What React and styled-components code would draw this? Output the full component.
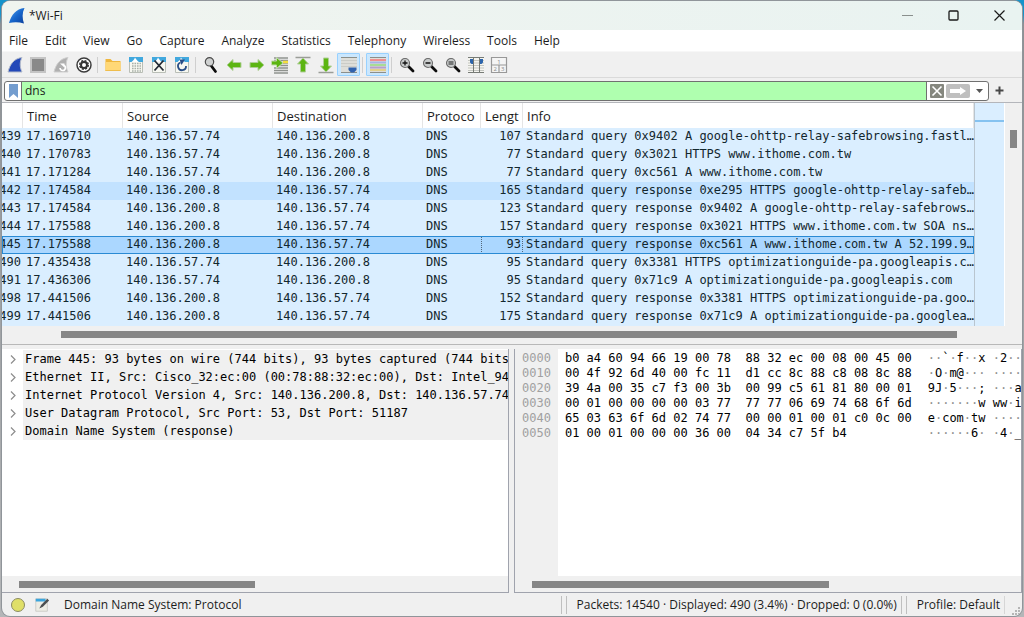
import React, { useState } from "react";
import styled, { createGlobalStyle } from "styled-components";

const GlobalStyle = createGlobalStyle`
  * {
    box-sizing: border-box;
  }
  body {
    margin: 0;
    background: linear-gradient(#1593cb 0, #1593cb 14px, #8d9093 24px, #b4b6b8 100%);
    color: #1c1c1c;
    font-family: "Open Sans", "Noto Sans", sans-serif;
    font-size: 12px;
  }
  button, input {
    font: inherit;
    color: inherit;
  }
`;

const mono = `"DejaVu Sans Mono", "Liberation Mono", monospace`;

const Desktop = styled.div`
  min-height: 100vh;
  padding: 1px 2px;
  display: flex;
`;

const Window = styled.div`
  flex: 1;
  min-width: 0;
  display: flex;
  flex-direction: column;
  background: #f0f0f0;
  border-radius: 8px;
  overflow: hidden;
  box-shadow: 0 0 0 1px #90959a;
`;

const TitleBar = styled.header`
  height: 29px;
  display: flex;
  align-items: center;
  padding-left: 7px;
  background: linear-gradient(90deg, #f0f4ef, #e9f3f1);
  h1 {
    flex: 1;
    margin: 0 0 0 4px;
    font-size: 12px;
    font-weight: 400;
  }
`;

const CaptionButton = styled.button`
  width: 46px;
  height: 29px;
  padding: 0;
  border: 0;
  background: none;
  svg {
    display: block;
    margin: 0 auto;
  }
`;

const MenuBar = styled.nav`
  height: 22px;
  display: flex;
  align-items: center;
  gap: 17px;
  padding: 0 7px;
  background: #fff;
  border-bottom: 1px solid #f7f7f7;
`;

const MenuButton = styled.button`
  padding: 0;
  border: 0;
  background: none;
  line-height: 20px;
`;

const ToolBar = styled.div`
  height: 26px;
  display: flex;
  align-items: center;
  padding: 0 1px;
  border-bottom: 1px solid #dadada;
`;

const ToolButton = styled.button`
  width: 23px;
  height: 23px;
  padding: 0;
  display: flex;
  align-items: center;
  justify-content: center;
  border: 1px solid ${(props) => (props.$active ? "#98d1ff" : "transparent")};
  background: ${(props) => (props.$active ? "#cbe7fd" : "none")};
  border-radius: 1px;
  svg {
    flex: none;
  }
`;

const Separator = styled.span`
  width: 1px;
  height: 16px;
  margin: 0 3px 0 2px;
  background: #cfcfcf;
`;

const FilterBar = styled.form`
  height: 25px;
  display: flex;
  align-items: center;
  padding: 1px 15px 0 2px;
  border-bottom: 1px solid #b4b6bb;
`;

const FilterBox = styled.div`
  flex: 1;
  height: 20px;
  display: flex;
  background: #fff;
  border: 1px solid #707070;
  border-radius: 3px;
  overflow: hidden;
`;

const BoxButton = styled.button`
  width: ${(props) => props.$width}px;
  padding: 0;
  display: flex;
  align-items: center;
  justify-content: center;
  border: 0;
  background: none;
`;

const FilterInput = styled.input`
  flex: 1;
  min-width: 0;
  padding: 0 3px;
  border: solid #707070;
  border-width: 0 1px;
  outline: 0;
  border-radius: 0;
  background: #afffaf;
`;

const AddButton = styled.button`
  width: 16px;
  height: 20px;
  margin-left: 2px;
  padding: 0;
  border: 0;
  background: none;
  svg {
    display: block;
    margin: 0 auto;
  }
`;

const PacketArea = styled.section`
  display: flex;
  background: #fff;
`;

const PacketTable = styled.table`
  flex: 1;
  min-width: 0;
  width: 100%;
  table-layout: fixed;
  border-collapse: separate;
  border-spacing: 0;
  th {
    height: 25px;
    padding: 0 0 0 4px;
    font-size: 13px;
    font-weight: 400;
    text-align: left;
    white-space: nowrap;
    overflow: hidden;
    background: #fff;
    border-right: 1px solid #e5e5e5;
  }
  td {
    height: 18px;
    padding: 0 2px 2px 3px;
    font: 12px/16px ${mono};
    color: #12272e;
    white-space: nowrap;
    overflow: hidden;
  }
  td:nth-child(1) {
    direction: rtl;
  }
  td:nth-child(6) {
    text-align: right;
  }
  td:last-child {
    padding-right: 0;
  }
`;

const rowColors = { plain: "#daeeff", related: "#c2e2ff", selected: "#abd7ff" };

const PacketRow = styled.tr`
  background: ${(props) => rowColors[props.$state]};
  outline: ${(props) => (props.$state === "selected" ? "1px solid #2a8ad4" : "none")};
  outline-offset: -1px;
  td:nth-child(6) {
    outline: ${(props) => (props.$state === "selected" ? "1px dotted #52677a" : "none")};
    outline-offset: -1px;
  }
`;

const MiniMap = styled.div`
  width: 30px;
  border-left: 1px solid #b9c5cf;
  background: linear-gradient(#daeeff 17px, #85c2f0 17px, #85c2f0 19px, #daeeff 19px);
`;

const VerticalScroll = styled.div`
  width: 18px;
  padding: 27px 5px 0;
  background: #f0f0f0;
  border-left: 1px solid #fff;
`;

const HorizontalScroll = styled.div`
  height: ${(props) => props.$height}px;
  padding: 5px ${(props) => props.$right} 0 ${(props) => props.$left};
  background: #f0f0f0;
`;

const Thumb = styled.div`
  width: 100%;
  height: ${(props) => props.$height || 7}px;
  background: #868686;
`;

const Panes = styled.main`
  flex: 1;
  display: grid;
  grid-template-columns: minmax(0, 507fr) minmax(0, 508fr);
  gap: 5px;
  padding-top: 4px;
  border-top: 1px solid #b8b8b8;
`;

const Pane = styled.section`
  display: flex;
  flex-direction: column;
  background: #fff;
  border: solid #a0a3ad;
  border-width: 0 1px 1px ${(props) => (props.$left ? 0 : 1)}px;
`;

const PaneBody = styled.div`
  flex: 1;
  display: flex;
  overflow: hidden;
`;

const Tree = styled.ul`
  flex: 1;
  min-width: 0;
  margin: 1px 0 0;
  padding: 0;
  list-style: none;
`;

const TreeRow = styled.li`
  display: flex;
  button {
    width: 21px;
    padding: 0;
    border: 0;
    background: none;
  }
  span {
    flex: 1;
    height: 18px;
    padding-left: 2px;
    background: #f0f0f0;
    color: #000;
    font: 12px/18px ${mono};
    white-space: pre;
    overflow: hidden;
  }
`;

const HexColumn = styled.div`
  flex: ${(props) => (props.$fill ? "1" : "none")};
  min-width: 0;
  padding: ${(props) => props.$pad};
  overflow: hidden;
  background: ${(props) => props.$bg || "#fff"};
  color: ${(props) => props.$color || "#000"};
  font: 12px/15px ${mono};
  white-space: pre;
`;

const HexLine = styled.div`
  height: 15px;
`;

const Faint = styled.span`
  color: #909090;
`;

const StatusBar = styled.footer`
  height: 23px;
  display: flex;
  align-items: center;
  padding-left: 8px;
  white-space: nowrap;
`;

const StatusText = styled.span`
  flex: ${(props) => (props.$grow ? "1" : "none")};
  margin-left: ${(props) => props.$indent}px;
`;

const IconButton = styled.button`
  width: 24px;
  height: 20px;
  padding: 0;
  border: 0;
  background: none;
  text-align: left;
  svg {
    display: block;
  }
`;

const Grip = styled.span`
  width: 6px;
  height: 18px;
  margin-left: ${(props) => props.$indent || 0}px;
  border: solid #bfbfbf;
  border-width: 0 1px;
`;

const Svg = ({ size = 18, children }) => (
  <svg width={size} height={size} viewBox="0 0 18 18" fill="none" aria-hidden="true">
    {children}
  </svg>
);

const Fin = ({ gray, restart }) => (
  <Svg>
    <path
      d="M2 16C4 8 8 2.5 16 1.5C13.5 6 13.8 11.5 16 16Z"
      fill={gray ? "#b0b0b0" : "#2448b8"}
      stroke={gray ? "#cfcfcf" : "#b4bccb"}
    />
    {restart && (
      <>
        <path d="M8 12a2.700 2.700 0 1 0 3.500-2.800" stroke="#fff" strokeWidth="1.6" />
        <path d="M8 7.500h4.500v4z" fill="#fff" />
      </>
    )}
  </Svg>
);

const Logo = () => (
  <svg width="16" height="18" viewBox="0 0 16 18" aria-hidden="true">
    <defs>
      <linearGradient id="fin" x1="0" y1="0" x2="1" y2="1">
        <stop offset="0" stopColor="#58a5ee" />
        <stop offset="0.5" stopColor="#1767cc" />
        <stop offset="1" stopColor="#0b3f9b" />
      </linearGradient>
    </defs>
    <path d="M0 16C2.5 7.5 7 2 15.5 1C13 6 13.2 11.5 15 16.5C10 15 5 15 0 16Z" fill="url(#fin)" />
  </svg>
);

const Page = ({ children }) => (
  <Svg>
    <path d="M2.5 1.5h13v15h-13z" fill="#f7f8f1" stroke="#b9beb6" />
    <path d="M2 1h14v5H2z" fill="#41a8de" />
    <path d="M4.500 6C6 5 7.500 3 8 1.500C9 3 10 4.500 12 6z" fill="#fff" />
    {children}
  </Svg>
);

const Arrow = ({ turn = 0, bar }) => (
  <Svg>
    {bar === "top" && <path d="M1.500 1.500h15" stroke="#9a9d98" strokeWidth="1.4" />}
    {bar === "bottom" && <path d="M1.500 16.500h15" stroke="#9a9d98" strokeWidth="1.4" />}
    <path
      d="M2 9l6-5.500v3h8v5H8v3z"
      transform={`rotate(${turn} 9 9)`}
      fill="#5cb512"
      stroke="#b0cf98"
      strokeLinejoin="round"
    />
  </Svg>
);

const Lens = ({ sign }) => (
  <Svg>
    <path d="M10.500 10.500l4.500 4.500" stroke="#0d0d0d" strokeWidth="2.8" strokeLinecap="round" />
    <circle cx="7" cy="7" r="4.500" fill="#c9cccc" stroke="#6a6a6a" strokeWidth="1.1" />
    {sign === "plus" && <path d="M4.5 7h5M7 4.5v5" stroke="#111" strokeWidth="1.3" />}
    {sign === "minus" && <path d="M4.5 7h5" stroke="#111" strokeWidth="1.5" />}
    {sign === "equal" && <path d="M4.5 6h5M4.5 8h5" stroke="#222" strokeWidth="1.2" />}
  </Svg>
);

const Find = () => (
  <Svg>
    <path d="M9 9.500l4.500 6" stroke="#0d0d0d" strokeWidth="2.8" strokeLinecap="round" />
    <circle cx="7.500" cy="5.800" r="4.200" fill="#cfd1d1" stroke="#4c4c4c" strokeWidth="1.2" />
  </Svg>
);

const Stop = () => (
  <Svg>
    <path d="M2 2h14v14H2z" fill="#898989" stroke="#c4c4c4" strokeWidth="2" />
  </Svg>
);

const Options = () => (
  <Svg>
    <circle cx="9" cy="9" r="7" fill="#fff" stroke="#3c3c3c" strokeWidth="1.5" />
    <circle cx="9" cy="9" r="4.300" stroke="#343434" strokeWidth="1.4" strokeDasharray="2.1 1.277" />
    <circle cx="9" cy="9" r="3" stroke="#343434" strokeWidth="2" />
  </Svg>
);

const Folder = () => (
  <Svg>
    <path d="M1.5 3h5l2 2h8v10h-15z" fill="#efb73e" />
    <path d="M1.5 6h15v9h-15z" fill="#ffd877" />
    <path d="M1.5 14.5h15" stroke="#efbd4c" />
  </Svg>
);

const Save = () => (
  <Page>
    <path d="M5 7.5h9M5 10h9M5 12.5h9M5 15h9" stroke="#a9b0a9" strokeWidth="1.4" strokeDasharray="1.6 0.9" />
  </Page>
);

const Close = () => (
  <Page>
    <path d="M4.500 4.500l9 10M13.500 4.500l-9 10" stroke="#252b35" strokeWidth="1.8" />
  </Page>
);

const Reload = () => (
  <Page>
    <path d="M7.500 6.500A4 4 0 1 0 13 10" stroke="#294d85" strokeWidth="1.8" />
    <path d="M6.500 3.500H12L8.500 9z" fill="#294d85" />
  </Page>
);

const GoTo = () => (
  <Svg>
    <path d="M3 2h14M3 4.500h14M9 7h8M9 9.500h8M3 12h14M3 14.500h14M3 17h14" stroke="#8f928e" strokeWidth="1.700" />
    <path d="M12 6h5" stroke="#f4de3f" strokeWidth="2.400" />
    <path d="M0.500 5h5V1.500L12 7l-6.500 5.500V9h-5z" fill="#5cb512" stroke="#c0dcaa" />
  </Svg>
);

const AutoScroll = () => (
  <Svg>
    <path d="M1 1h16v15H1z" fill="#deded9" />
    <path d="M1 4.5h16M1 7.5h16M1 10.5h16" stroke="#cbccc7" />
    <path d="M1 1.500h16M1 16.500h16" stroke="#8b8f8b" />
    <path d="M8.500 11.500h8v2.500l-2.500 2.500h-3L8.500 14z" fill="#3062ae" />
  </Svg>
);

const Colorize = () => (
  <Svg>
    <path d="M1 1h16v16H1z" fill="#deded9" />
    <path d="M1 4h16" stroke="#f08f8f" strokeWidth="1.800" />
    <path d="M1 6.5h16" stroke="#a5b4e6" strokeWidth="1.800" />
    <path d="M1 9h16" stroke="#a9dc94" strokeWidth="1.800" />
    <path d="M1 11.5h16" stroke="#b6a0cc" strokeWidth="1.800" />
    <path d="M1 14h16" stroke="#e3d08c" strokeWidth="1.800" />
    <path d="M1 1.500h16M1 16.500h16" stroke="#8b8f8b" />
  </Svg>
);

const Resize = () => (
  <Svg>
    <path d="M1 1h16v16H1z" fill="#f4f4ef" />
    <path d="M1 4.500h16M1 7h16M1 9.500h16M1 12h16M1 14.500h16" stroke="#c3c5c0" />
    <path d="M1 1.500h16M1 16.500h16" stroke="#777b76" />
    <path d="M6.5 1v16M12.500 1v16" stroke="#767a75" />
    <path d="M3 3h3v5H4.500L3 6.500zM16 3h-3v5h1.500L16 6.500z" fill="#2c64ab" />
  </Svg>
);

const LayoutIcon = () => (
  <Svg>
    <path d="M1.5 1.5h15v15h-15zM1.5 9h15M9 9v7.500" fill="#f5f5f5" stroke="#989898" strokeWidth="1.2" />
    <g fill="#8a8a8a" fontSize="6" textAnchor="middle">
      <text x="9" y="7.500">1</text>
      <text x="5.300" y="15">2</text>
      <text x="12.800" y="15">3</text>
    </g>
  </Svg>
);

const tools = [
  { label: "Start capture", icon: <Fin /> },
  { label: "Stop capture", icon: <Stop /> },
  { label: "Restart capture", icon: <Fin gray restart /> },
  { label: "Capture options", icon: <Options /> },
  null,
  { label: "Open", icon: <Folder /> },
  { label: "Save", icon: <Save /> },
  { label: "Close file", icon: <Close /> },
  { label: "Reload", icon: <Reload /> },
  null,
  { label: "Find packet", icon: <Find /> },
  { label: "Previous packet", icon: <Arrow /> },
  { label: "Next packet", icon: <Arrow turn={180} /> },
  { label: "Go to packet", icon: <GoTo /> },
  { label: "First packet", icon: <Arrow turn={90} bar="top" /> },
  { label: "Last packet", icon: <Arrow turn={-90} bar="bottom" /> },
  { label: "Auto scroll", icon: <AutoScroll />, active: true },
  null,
  { label: "Colorize", icon: <Colorize />, active: true },
  null,
  { label: "Zoom in", icon: <Lens sign="plus" /> },
  { label: "Zoom out", icon: <Lens sign="minus" /> },
  { label: "Normal size", icon: <Lens sign="equal" /> },
  { label: "Resize columns", icon: <Resize /> },
  { label: "Reset layout", icon: <LayoutIcon /> },
];

const menus = [
  "File", "Edit", "View", "Go", "Capture", "Analyze",
  "Statistics", "Telephony", "Wireless", "Tools", "Help",
];

const HOST = "140.136.57.74";
const SERVER = "140.136.200.8";

const packets = [
  ["439", "17.169710", HOST, SERVER, "107", "Standard query 0x9402 A google-ohttp-relay-safebrowsing.fastl…"],
  ["440", "17.170783", HOST, SERVER, "77", "Standard query 0x3021 HTTPS www.ithome.com.tw"],
  ["441", "17.171284", HOST, SERVER, "77", "Standard query 0xc561 A www.ithome.com.tw"],
  ["442", "17.174584", SERVER, HOST, "165", "Standard query response 0xe295 HTTPS google-ohttp-relay-safeb…", "related"],
  ["443", "17.174584", SERVER, HOST, "123", "Standard query response 0x9402 A google-ohttp-relay-safebrows…"],
  ["444", "17.175588", SERVER, HOST, "157", "Standard query response 0x3021 HTTPS www.ithome.com.tw SOA ns…"],
  ["445", "17.175588", SERVER, HOST, "93", "Standard query response 0xc561 A www.ithome.com.tw A 52.199.9…", "selected"],
  ["490", "17.435438", HOST, SERVER, "95", "Standard query 0x3381 HTTPS optimizationguide-pa.googleapis.c…"],
  ["491", "17.436306", HOST, SERVER, "95", "Standard query 0x71c9 A optimizationguide-pa.googleapis.com"],
  ["498", "17.441506", SERVER, HOST, "152", "Standard query response 0x3381 HTTPS optimizationguide-pa.goo…"],
  ["499", "17.441506", SERVER, HOST, "175", "Standard query response 0x71c9 A optimizationguide-pa.googlea…"],
];

const details = [
  "Frame 445: 93 bytes on wire (744 bits), 93 bytes captured (744 bits)",
  "Ethernet II, Src: Cisco_32:ec:00 (00:78:88:32:ec:00), Dst: Intel_94:",
  "Internet Protocol Version 4, Src: 140.136.200.8, Dst: 140.136.57.74",
  "User Datagram Protocol, Src Port: 53, Dst Port: 51187",
  "Domain Name System (response)",
];

const hexRows = [
  ["0000", "b0 a4 60 94 66 19 00 78  88 32 ec 00 08 00 45 00", "··`·f··x ·2··"],
  ["0010", "00 4f 92 6d 40 00 fc 11  d1 cc 8c 88 c8 08 8c 88", "·O·m@··· ····"],
  ["0020", "39 4a 00 35 c7 f3 00 3b  00 99 c5 61 81 80 00 01", "9J·5···; ···a"],
  ["0030", "00 01 00 00 00 00 03 77  77 77 06 69 74 68 6f 6d", "·······w ww·i"],
  ["0040", "65 03 63 6f 6d 02 74 77  00 00 01 00 01 c0 0c 00", "e·com·tw ····"],
  ["0050", "01 00 01 00 00 00 36 00  04 34 c7 5f b4", "······6· ·4·_"],
];

// unprintable bytes are shown as faint dots
const renderAscii = (text) =>
  text
    .split(/(·+)/)
    .map((part, i) => (part[0] === "·" ? <Faint key={i}>{part}</Faint> : part));

const App = () => {
  const [filter, setFilter] = useState("dns");
  return (
    <>
      <GlobalStyle />
      <Desktop>
        <Window>
          <TitleBar>
            <Logo />
            <h1>*Wi-Fi</h1>
            <CaptionButton aria-label="Minimize">
              <svg width="11" height="11"><path d="M0 5.500h11" stroke="#8a8f8d" /></svg>
            </CaptionButton>
            <CaptionButton aria-label="Maximize">
              <svg width="11" height="11">
                <rect x="1" y="1" width="9" height="9" rx="1" fill="none" stroke="#1a1a1a" strokeWidth="1.3" />
              </svg>
            </CaptionButton>
            <CaptionButton aria-label="Close">
              <svg width="11" height="11"><path d="M0.500 0.500l10 10M10.500 0.500l-10 10" stroke="#1a1a1a" strokeWidth="1.2" /></svg>
            </CaptionButton>
          </TitleBar>
          <MenuBar>
            {menus.map((name) => (
              <MenuButton key={name}>{name}</MenuButton>
            ))}
          </MenuBar>
          <ToolBar>
            {tools.map((tool, i) =>
              tool ? (
                <ToolButton key={tool.label} aria-label={tool.label} $active={tool.active}>
                  {tool.icon}
                </ToolButton>
              ) : (
                <Separator key={i} />
              )
            )}
          </ToolBar>
          <FilterBar onSubmit={(e) => e.preventDefault()}>
            <FilterBox>
              <BoxButton type="button" $width={16} aria-label="Bookmarks">
                <svg width="9" height="14"><path d="M0 0h9v14l-4.500-4L0 14z" fill="#749dcf" /></svg>
              </BoxButton>
              <FilterInput
                aria-label="Display filter"
                value={filter}
                onChange={(e) => setFilter(e.target.value)}
              />
              <BoxButton type="button" $width={19} aria-label="Clear" onClick={() => setFilter("")}>
                <svg width="14" height="14">
                  <rect width="14" height="14" rx="1" fill="#85877f" />
                  <path d="M2.500 2.500l9 9M11.500 2.500l-9 9" stroke="#fff" strokeWidth="1.6" />
                </svg>
              </BoxButton>
              <BoxButton type="submit" $width={24} aria-label="Apply">
                <svg width="24" height="14">
                  <rect width="24" height="14" rx="2" fill="#bfbfbf" />
                  <path d="M4 5h10V3l6 4-6 4V9H4z" fill="#fff" />
                </svg>
              </BoxButton>
              <BoxButton type="button" $width={18} aria-label="Recent filters">
                <svg width="7" height="4"><path d="M0 0h7L3.500 4z" fill="#555" /></svg>
              </BoxButton>
            </FilterBox>
            <AddButton type="button" aria-label="Add filter button">
              <svg width="9" height="9"><path d="M0.500 4.500h8M4.500 0.500v8" stroke="#484848" strokeWidth="2" /></svg>
            </AddButton>
          </FilterBar>
          <PacketArea>
            <PacketTable>
              <colgroup>
                <col width="21" />
                <col width="100" />
                <col width="150" />
                <col width="150" />
                <col width="58" />
                <col width="42" />
                <col />
              </colgroup>
              <thead>
                <tr>
                  <th aria-label="No." />
                  <th>Time</th>
                  <th>Source</th>
                  <th>Destination</th>
                  <th>Protoco</th>
                  <th>Lengt</th>
                  <th>Info</th>
                </tr>
              </thead>
              <tbody>
                {packets.map(([no, time, source, destination, length, info, state]) => (
                  <PacketRow key={no} $state={state || "plain"}>
                    <td>{no}</td>
                    <td>{time}</td>
                    <td>{source}</td>
                    <td>{destination}</td>
                    <td>DNS</td>
                    <td>{length}</td>
                    <td>{info}</td>
                  </PacketRow>
                ))}
              </tbody>
            </PacketTable>
            <MiniMap />
            <VerticalScroll>
              <Thumb $height={18} />
            </VerticalScroll>
          </PacketArea>
          <HorizontalScroll $height={18} $left="59px" $right="65px">
            <Thumb />
          </HorizontalScroll>
          <Panes>
            <Pane $left>
              <PaneBody>
                <Tree>
                  {details.map((line) => (
                    <TreeRow key={line}>
                      <button aria-label="Expand">
                        <svg width="6" height="9"><path d="M1 0.500l4 4-4 4" fill="none" stroke="#8c8c8c" strokeWidth="1.2" /></svg>
                      </button>
                      <span>{line}</span>
                    </TreeRow>
                  ))}
                </Tree>
              </PaneBody>
              <HorizontalScroll $height={16} $left="17px" $right="50%">
                <Thumb />
              </HorizontalScroll>
            </Pane>
            <Pane>
              <PaneBody>
                <HexColumn $pad="2px 7px 0" $bg="#f0f0f0" $color="#a0a0a0">
                  {hexRows.map(([offset]) => (
                    <HexLine key={offset}>{offset}</HexLine>
                  ))}
                </HexColumn>
                <HexColumn $pad="2px 0 0 7px">
                  {hexRows.map(([offset, bytes]) => (
                    <HexLine key={offset}>{bytes}</HexLine>
                  ))}
                </HexColumn>
                <HexColumn $fill $pad="2px 0 0 16px">
                  {hexRows.map(([offset, , ascii]) => (
                    <HexLine key={offset}>{renderAscii(ascii)}</HexLine>
                  ))}
                </HexColumn>
              </PaneBody>
              <HorizontalScroll $height={16} $left="17px" $right="38%">
                <Thumb />
              </HorizontalScroll>
            </Pane>
          </Panes>
          <StatusBar>
            <IconButton aria-label="Expert information">
              <svg width="16" height="16"><circle cx="8" cy="8" r="6.500" fill="#dfdf68" stroke="#8b8b62" /></svg>
            </IconButton>
            <IconButton aria-label="Capture comment">
              <Svg size={16}>
                <path d="M2 2h13v14H2z" fill="#ededE5" stroke="#c9c9c4" />
                <path d="M2 2h11v3H2z" fill="#3ba5dd" />
                <path d="M6 13l2-4 7-7 2 2-7 7z" fill="#4c4f50" />
              </Svg>
            </IconButton>
            <StatusText $grow $indent={6}>Domain Name System: Protocol</StatusText>
            <Grip />
            <StatusText $indent={10}>Packets: 14540 · Displayed: 490 (3.4%) · Dropped: 0 (0.0%)</StatusText>
            <Grip $indent={4} />
            <StatusText $indent={10}>Profile: Default</StatusText>
            <svg width="22" height="22" aria-hidden="true">
              <path d="M4.500 2v18" stroke="#d6d6d6" />
              <path d="M18 13h2v2h-2zM15 16h2v2h-2zM18 16h2v2h-2zM12 19h2v2h-2zM15 19h2v2h-2zM18 19h2v2h-2z" fill="#b5b5b5" />
            </svg>
          </StatusBar>
        </Window>
      </Desktop>
    </>
  );
};

export default App;
